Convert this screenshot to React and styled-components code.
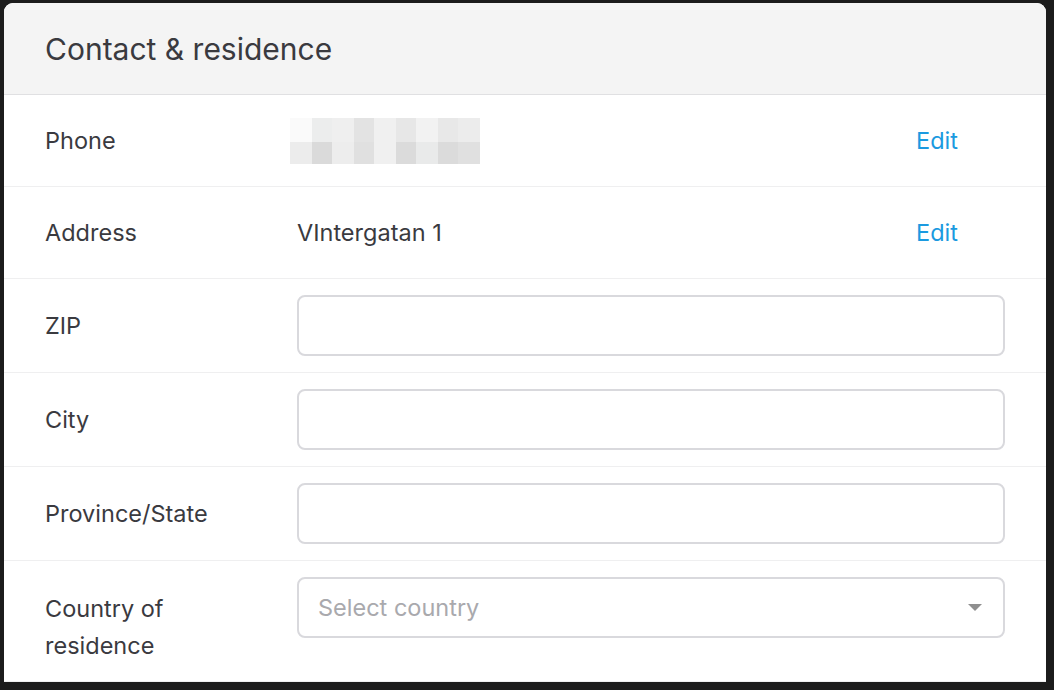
import React from 'react';
import styled, { createGlobalStyle } from 'styled-components';

const GlobalStyle = createGlobalStyle`
  html, body {
    margin: 0;
    height: 100%;
    background: #1c1c1c;
  }
  body {
    font-family: Inter, "Noto Sans", sans-serif;
    color: #3a3a3f;
    overflow: hidden;
  }
  #root {
    height: 100%;
  }
`;

const BLUR_CELLS = [
  ['#fafafa', '#eceded', '#efefef', '#e3e3e3', '#f0f0f0', '#e7e7e7', '#f2f2f2', '#e8e8e8', '#ececec'],
  ['#ececec', '#dadada', '#ededed', '#e0e0e0', '#f0f0f0', '#dbdbdb', '#e9eaea', '#dbdbdb', '#e0e0e0'],
];

const BLUR_WIDTHS = [22, 20, 22, 20, 22, 20, 22, 20, 22];

const Frame = styled.div`
  box-sizing: border-box;
  height: 100%;
  padding: 3px 8px 8px 4px;
`;

const Card = styled.section`
  height: 100%;
  background: #ffffff;
  border-radius: 9px 9px 0 0;
  overflow: hidden;
`;

const Header = styled.header`
  height: 91px;
  display: flex;
  align-items: center;
  padding: 0 41px;
  background: #f4f4f4;
  border-bottom: 1px solid #e0e0e2;
`;

const Title = styled.h2`
  margin: 0;
  font-size: 30px;
  font-weight: 400;
  color: #3a3a3f;
`;

const Row = styled.div`
  display: grid;
  grid-template-columns: 252px 1fr;
  align-items: center;
  min-height: ${props => (props.$tall ? 92 : 93)}px;
  padding: 0 41px;
  border-bottom: 1px solid #efeff0;
  box-sizing: border-box;
`;

const Label = styled.div`
  font-size: 23.5px;
  line-height: 37px;
  color: #3a3a3f;
  align-self: ${props => (props.$top ? 'start' : 'center')};
  padding-top: ${props => (props.$top ? '29px' : '0')};
`;

const ValueCell = styled.div`
  display: flex;
  align-items: center;
  justify-content: space-between;
`;

const Value = styled.span`
  font-size: 23.5px;
  color: #3a3a3f;
`;

const EditLink = styled.a`
  margin-right: 47px;
  font-size: 23.5px;
  color: #1b9ae0;
  text-decoration: none;
  cursor: pointer;
`;

const Blurred = styled.div`
  display: grid;
  grid-template-columns: ${BLUR_WIDTHS.map(w => `${w}px`).join(' ')};
  grid-template-rows: 24px 22px;
  margin-left: -7px;
`;

const BlurCell = styled.span`
  background: ${props => props.$color};
`;

const TextInput = styled.input`
  box-sizing: border-box;
  width: 100%;
  height: 61px;
  margin: 16px 0;
  padding: 0 19px;
  border: 2px solid #d9d9dd;
  border-radius: 8px;
  font-family: inherit;
  font-size: 23.5px;
  color: #3a3a3f;
  background: #ffffff;
  outline: none;
`;

const SelectBox = styled.div`
  box-sizing: border-box;
  width: 100%;
  height: 61px;
  margin: 16px 0 43px;
  padding: 0 19px;
  align-self: start;
  display: flex;
  align-items: center;
  justify-content: space-between;
  border: 2px solid #d9d9dd;
  border-radius: 8px;
  font-size: 23.5px;
  color: #a9a9ad;
`;

const Caret = styled.span`
  width: 0;
  height: 0;
  margin-right: 2px;
  border-left: 7px solid transparent;
  border-right: 7px solid transparent;
  border-top: 7px solid #8f8f8f;
`;

const PhoneBlur = () => (
  <Blurred>
    {BLUR_CELLS.flatMap((row, r) =>
      row.map((color, c) => <BlurCell key={`${r}-${c}`} $color={color} />)
    )}
  </Blurred>
);

const App = () => (
  <>
    <GlobalStyle />
    <Frame>
      <Card>
        <Header>
          <Title>Contact &amp; residence</Title>
        </Header>

        <Row $tall>
          <Label>Phone</Label>
          <ValueCell>
            <PhoneBlur />
            <EditLink>Edit</EditLink>
          </ValueCell>
        </Row>

        <Row $tall>
          <Label>Address</Label>
          <ValueCell>
            <Value>VIntergatan 1</Value>
            <EditLink>Edit</EditLink>
          </ValueCell>
        </Row>

        <Row>
          <Label>ZIP</Label>
          <TextInput type="text" />
        </Row>

        <Row>
          <Label>City</Label>
          <TextInput type="text" />
        </Row>

        <Row>
          <Label>Province/State</Label>
          <TextInput type="text" />
        </Row>

        <Row>
          <Label $top>
            Country of
            <br />
            residence
          </Label>
          <SelectBox>
            <span>Select country</span>
            <Caret />
          </SelectBox>
        </Row>
      </Card>
    </Frame>
  </>
);

export default App;
